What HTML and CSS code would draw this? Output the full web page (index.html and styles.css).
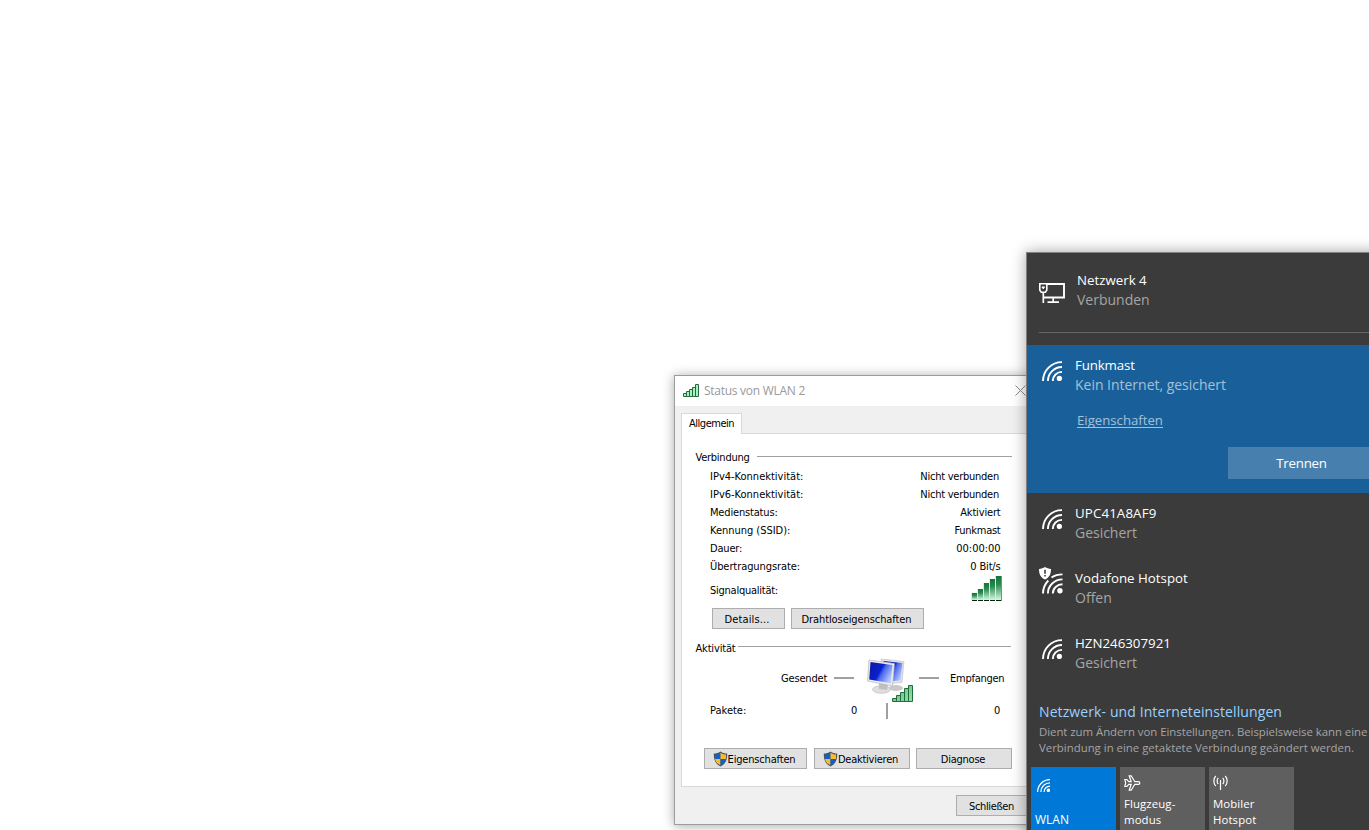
FILE: index.html
```
<!DOCTYPE html>
<html lang="de">
<head>
<meta charset="utf-8">
<title>Status von WLAN 2</title>
<link rel="stylesheet" href="styles.css">
</head>
<body>
<svg class="defs" width="0" height="0">
  <defs>
    <linearGradient id="bar" x1="0" y1="0" x2="0" y2="1"><stop offset="0" stop-color="#107638"/><stop offset=".35" stop-color="#2b8a50"/><stop offset="1" stop-color="#d4f9df"/></linearGradient>
    <linearGradient id="bar2" x1="0" y1="0" x2="1" y2="1"><stop offset="0" stop-color="#58b877"/><stop offset="1" stop-color="#9be0ac"/></linearGradient>
    <linearGradient id="scr" x1="0" y1=".1" x2="1" y2=".6"><stop offset="0" stop-color="#0a1a9c"/><stop offset=".5" stop-color="#0a20d2"/><stop offset=".62" stop-color="#4a68ea"/><stop offset="1" stop-color="#b8caff"/></linearGradient>
    <symbol id="wifi" viewBox="0 0 20 20">
      <g fill="none" stroke="#fff" stroke-width="1.9"><path d="M1 20C1 9.500 9.500 1.100 20 1.100"/><path d="M5.900 20C5.900 12.200 12.200 6 20 6"/><path d="M10.800 20C10.800 14.900 14.900 10.900 20 10.900"/></g>
      <circle cx="17.400" cy="17.400" r="2.700" fill="#fff"/>
    </symbol>
    <symbol id="shield" viewBox="0 0 15 16">
      <path d="M7.500.5C5.500 2 3.200 2.500.8 2.600C.6 8.500 2.200 13 7.500 15.500C12.800 13 14.400 8.500 14.200 2.600C11.800 2.500 9.500 2 7.500.5Z" fill="#4a5560"/>
      <path d="M7.500 1.800C5.800 3 4 3.500 2 3.600L2 8H7.500Z" fill="#0b63c9"/>
      <path d="M7.500 1.800C9.200 3 11 3.500 13 3.600L13 8H7.500Z" fill="#fdb82e"/>
      <path d="M2 8H7.500V14.300C4.200 12.700 2.500 10.800 2 8Z" fill="#fdb82e"/>
      <path d="M13 8H7.500V14.300C10.800 12.700 12.500 10.800 13 8Z" fill="#0b63c9"/>
    </symbol>
  </defs>
</svg>

<main class="desktop">
  <section class="dialog">
    <header class="titlebar">
      <svg class="sig" width="17" height="13" viewBox="0 0 17 13"><g fill="#a4f3b8" stroke="#2a6641"><path d="M.5 9.500h3v3h-3zM3.500 7.500h3v5h-3zM6.500 5.500h3v7h-3zM9.500 3.500h3v9h-3zM12.500.5h3v12h-3z"/></g></svg>
      <h1>Status von WLAN 2</h1>
      <svg class="close" width="11" height="11" viewBox="0 0 11 11"><path d="M.5.5l10 10M10.500.5l-10 10" stroke="#8a8a8a" fill="none"/></svg>
    </header>
    <div class="tabs"><span class="tab t45">Allgemein</span></div>
    <div class="panel">
      <div class="legend conn"><span class="t25">Verbindung</span><i></i></div>
      <dl>
        <div><dt class="t00">IPv4-Konnektivität:</dt><dd class="nv t25">Nicht verbunden</dd></div>
        <div><dt class="t00">IPv6-Konnektivität:</dt><dd class="nv t25">Nicht verbunden</dd></div>
        <div><dt>Medienstatus:</dt><dd>Aktiviert</dd></div>
        <div><dt class="t03">Kennung (SSID):</dt><dd class="t25">Funkmast</dd></div>
        <div><dt>Dauer:</dt><dd class="t03">00:00:00</dd></div>
        <div><dt class="t08">Übertragungsrate:</dt><dd>0 Bit/s</dd></div>
        <div class="signal"><dt class="t25">Signalqualität:</dt><dd>
          <svg width="31" height="27" viewBox="0 0 31 27"><g fill="url(#bar)"><path d="M1 18h5v7H1z"/><path d="M7 14h5v11H7z"/><path d="M13 8h5v17h-5z"/><path d="M19 4h5v21h-5z"/><path d="M25 1h5v24h-5z"/></g><path d="M1 25.500h5M7 25.500h5M13 25.500h5M19 25.500h5M25 25.500h5" stroke="#06220f"/><path d="M.5 18v7M6.500 14v11M12.500 8v17M18.500 4v21M24.500 1v24" stroke="#c5efd0" stroke-width=".8"/><path d="M30.500 1v25" stroke="#6f9a7e"/></svg>
        </dd></div>
      </dl>
      <div class="buttons first"><span class="btn w73 details">Details...</span><span class="btn w133 t08">Drahtloseigenschaften</span></div>
      <div class="legend act"><span>Aktivität</span><i></i></div>
      <div class="traffic">
        <div class="sent"><span>Gesendet</span><i class="dash"></i></div>
        <div class="pcs">
          <svg width="48" height="46" viewBox="0 0 48 46">
            <ellipse cx="29" cy="30" rx="7" ry="3" fill="#c9c9c9"/>
            <path d="M14 1L37 3.500L35 24.500L17 26Z" fill="#e4e4e6" stroke="#bdbdbd" stroke-width=".6"/>
            <path d="M16.500 3L35.500 5L33.500 22.500L18 23.500Z" fill="url(#scr)"/>
            <ellipse cx="14.500" cy="31.500" rx="9" ry="3.800" fill="#dedede" stroke="#bbb" stroke-width=".6"/>
            <path d="M12 25l9 1-1 6-8-1z" fill="#c0c0c0"/>
            <path d="M2 2L27.500 5.500L25.500 28L.5 23Z" fill="#ededf0" stroke="#b4b4b8" stroke-width=".7"/>
            <path d="M3.500 4L25.500 7L23.800 25.300L2.200 21.500Z" fill="url(#scr)"/>
            <g fill="url(#bar2)" stroke="#1e6e3d"><path d="M25.500 40.500h4v3h-4zM29.500 37.500h4v6h-4zM33.500 34.500h4v9h-4zM37.500 30.500h4v13h-4zM41.500 27.500h4v16h-4z"/></g>
          </svg>
          <i class="stem"></i>
        </div>
        <div class="recv"><i class="dash"></i><span class="t25">Empfangen</span></div>
        <div class="packets">Pakete:</div><div class="n1">0</div><div class="n2">0</div>
      </div>
      <div class="buttons second">
        <span class="btn w103"><svg width="15" height="16"><use href="#shield"/></svg>Eigenschaften</span>
        <span class="btn w96"><svg width="15" height="16"><use href="#shield"/></svg><span class="t25">Deaktivieren</span></span>
        <span class="btn w96 plain t25">Diagnose</span>
      </div>
    </div>
    <footer><span class="btn w73 t35">Schließen</span></footer>
  </section>

  <aside class="flyout">
    <div class="wired">
      <svg width="27" height="21" viewBox="0 0 27 21" fill="none" stroke="#fff"><path d="M.8.8h7v6.400l-1.500 2H2.300L.8 7.200z" stroke-width="1.600"/><path d="M2.800 4.300h3M4.300 4v2" stroke-width="1.500"/><path d="M4.300 9V20" stroke-width="1.700"/><path d="M8 1h17v13.500H4" stroke-width="1.900"/><path d="M14.200 15v4M8.500 19.200h11.500" stroke-width="1.700"/></svg>
      <div><h2>Netzwerk 4</h2><p>Verbunden</p></div>
    </div>
    <div class="net active">
      <svg width="20" height="20"><use href="#wifi"/></svg>
      <div><h2 class="fm">Funkmast</h2><p class="tight">Kein Internet, gesichert</p><a>Eigenschaften</a></div>
      <span class="disconnect">Trennen</span>
    </div>
    <div class="net"><svg width="20" height="20"><use href="#wifi"/></svg><div><h2 class="wide">UPC41A8AF9</h2><p class="tight">Gesichert</p></div></div>
    <div class="net open">
      <svg width="24" height="27" viewBox="0 0 24 27"><g fill="none" stroke="#fff" stroke-width="1.900"><path d="M4 26.500c0-5 2-9.500 5.300-13M12.500 10.500c3-2 6.800-3.100 11-3.100"/><path d="M8.900 26.500c0-7.800 6.600-14.100 14.600-14.100M13.800 26.500c0-5.200 4.400-9.200 9.700-9.200"/></g><circle cx="20.900" cy="23.800" r="2.700" fill="#fff"/><path d="M6 0C4.300 1.200 2.300 1.800 0 2c0 5 1.500 8.500 6 10.500c4.500-2 6-5.500 6-10.500C9.700 1.800 7.700 1.200 6 0z" fill="#fff"/><path d="M6 2.800v4M6 8v1.600" stroke="#333" stroke-width="1.500"/></svg>
      <div><h2>Vodafone Hotspot</h2><p>Offen</p></div>
    </div>
    <div class="net"><svg width="20" height="20"><use href="#wifi"/></svg><div><h2>HZN246307921</h2><p class="tight">Gesichert</p></div></div>
    <a class="settings">Netzwerk- und Interneteinstellungen</a>
    <p class="hint">Dient zum Ändern von Einstellungen. Beispielsweise kann eine<br><span>Verbindung in eine getaktete Verbindung geändert werden.</span></p>
    <div class="tiles">
      <div class="tile on"><svg width="13" height="13"><use href="#wifi"/></svg><span class="wl">WLAN</span></div>
      <div class="tile"><svg width="17" height="16" viewBox="0 0 17 16" fill="none" stroke="#fff" stroke-width="1.200"><path d="M1.700 8L.8 4.500H2.800L4.800 6.700H7.200L5.200.8H7.200L10.800 6.700H14.500a1.300 1.300 0 010 2.600H10.800L7.200 15.200H5.200L7.200 9.300H4.800L2.800 11.500H.8Z"/></svg><span>Flugzeug-<br>modus</span></div>
      <div class="tile"><svg width="16" height="15" viewBox="0 0 16 15" fill="none" stroke="#fff" stroke-width="1.200"><path d="M2.800 1C.2 3.500.2 8.500 2.800 11M5.300 3C3.700 4.500 3.700 7.500 5.300 9M12.200 1c2.600 2.500 2.600 7.500 0 10M9.700 3c1.600 1.500 1.600 4.500 0 6M7.500 5v10"/></svg><span>Mobiler<br>Hotspot</span></div>
    </div>
  </aside>
</main>
</body>
</html>
```
FILE: styles.css
```
* { box-sizing: border-box; margin: 0; padding: 0; }
body { background: #fff; overflow: hidden; }
svg { display: block; flex: none; }
.defs { position: absolute; }
i { display: block; }
.desktop { position: relative; width: 1369px; height: 830px; overflow: hidden; background: #fff; }

/* status dialog */
.dialog {
  position: absolute; left: 674px; top: 375px; width: 376px; height: 450px;
  display: flex; flex-direction: column;
  background: #f0f0f0; border: 1px solid #9c9c9c;
  box-shadow: 0 1px 11px rgba(0,0,0,.34);
  font: 11px/18px "DejaVu Sans Condensed", "DejaVu Sans", sans-serif; letter-spacing: -.17px; color: #000;
  white-space: nowrap;
}
.t00 { letter-spacing: 0; }
.t03 { letter-spacing: -.03px; }
.t08 { letter-spacing: -.08px; }
.t25 { letter-spacing: -.25px; }
.t35 { letter-spacing: -.35px; }
.t45 { letter-spacing: -.47px; }
.titlebar { display: flex; align-items: center; height: 30px; padding-left: 8px; background: #fff; }
.titlebar .sig { margin-top: -1px; }
.titlebar h1 { flex: none; width: 316px; margin-left: 4px; font: 12px/18px "Open Sans", sans-serif; letter-spacing: -.27px; color: #999; }
.titlebar .close { margin: -2px 0 0 -5px; }
.tabs { height: 27px; padding: 7px 0 0 6px; }
.tab { position: relative; z-index: 1; display: block; width: 61px; height: 21px; padding-left: 7px; line-height: 19px; background: #fff; border: 1px solid #d9d9d9; border-bottom: 0; }
.panel { height: 354px; margin: 0 6px; padding-top: 15px; background: #fff; border: 1px solid #d9d9d9; }
.legend { display: flex; align-items: flex-start; height: 18px; padding-left: 13.5px; }
.legend span { flex: none; }
.legend i { flex: none; height: 1px; margin-top: 7px; background: #a0a0a0; }
.conn span { width: 61.5px; }
.conn i { width: 255px; }
.act { margin-top: 11px; }
.act span { width: 42.5px; }
.act i { width: 273px; margin-top: 6px; }
dl { margin-top: 1px; padding: 0 43px 0 28px; width: 362px; }
dl > div { display: flex; justify-content: space-between; width: 290.500px; }
dd.nv { margin-right: 1.500px; }
dl > .signal { width: 292px; height: 32px; }
.signal dt { margin-top: 6px; }
.signal dd { margin-top: -1px; }
.buttons { display: flex; height: 21px; }
.first { padding-left: 30px; gap: 6px; }
.second { margin-top: 20px; padding-left: 22px; gap: 7px; }
.second .plain { margin-left: -1px; }
.btn { display: flex; align-items: center; justify-content: center; height: 21px; padding: 2px 2px 0 0; background: #e1e1e1; border: 1px solid #adadad; }
.btn svg { margin: -2px 0 0 -1px; }
.details { padding-right: 3px; letter-spacing: .15px; }
.w73 { width: 73px; }
.w96 { width: 96px; }
.w103 { width: 103px; }
.w133 { width: 133px; }
.traffic { display: grid; grid-template: 44px 26px / 177px 60px 100px; height: 70px; }
.sent, .recv { display: flex; align-items: flex-start; padding-top: 12px; }
.sent { padding-left: 99px; }
.sent span { width: 53px; }
.recv span { margin-left: 11px; }
.dash { flex: none; width: 20px; height: 2px; margin-top: 7px; background: #a0a0a0; }
.pcs { grid-row: 1 / 3; grid-column: 2; padding: 0 0 0 8px; }
.stem { width: 2px; height: 16px; margin: -1px 0 0 19px; background: #a0a0a0; }
.recv { grid-column: 3; }
.packets { grid-row: 2; grid-column: 1; padding-left: 28px; letter-spacing: 0; }
.n1 { grid-row: 2; grid-column: 1; justify-self: end; padding-right: 2px; }
.n2 { grid-row: 2; grid-column: 3; padding-left: 75px; }
.dialog footer { display: flex; padding: 8px 0 0 281px; }

/* network flyout */
.flyout {
  position: absolute; left: 1026px; top: 252px; width: 362px; height: 620px;
  background: #3b3b3b; border: 1px solid #808080;
  box-shadow: 0 0 14px rgba(0,0,0,.36);
  font: 14px/20px "Open Sans", sans-serif; color: #fff; white-space: nowrap;
}
.flyout h2 { font-size: 13.3px; font-weight: 400; line-height: 20px; }
.flyout h2.fm { letter-spacing: -.15px; }
.flyout h2.wide { letter-spacing: .12px; }
.flyout p { color: #a5a5a5; letter-spacing: 0; }
.flyout p.tight { letter-spacing: -.02px; }
.wired { display: flex; height: 80px; margin: 0 0 12px 12px; padding-top: 17px; border-bottom: 1px solid #666; }
.wired svg { margin-top: 13px; }
.wired > div { margin-left: 11px; }
.net { display: flex; height: 65px; padding: 10px 12px 0 15px; }
.net > svg { margin-top: 6px; }
.net > div { margin-left: 13px; }
.open { padding-left: 12px; }
.open > svg { margin-top: -1px; }
.open > div { margin-left: 12px; }
.active { height: 148px; background: #19609a; }
.flyout .active p, .active a { color: #a3c0d8; }
.active a { display: block; width: 86px; height: 18px; margin: 15px 0 0 2px; font-size: 13.2px; line-height: 20px; border-bottom: 1px solid #a3c0d8; }
.disconnect { width: 147px; height: 32px; margin: 92px 0 0 auto; background: #4780ae; font-size: 13.3px; letter-spacing: -.25px; line-height: 32px; text-align: center; }
.net.active > div { width: 153px; }
.settings { display: block; margin: 14px 0 0 12px; color: #99d1ff; letter-spacing: .1px; }
.flyout .hint { margin: 2px 0 0 12px; font-size: 11.4px; line-height: 16px; letter-spacing: -.04px; }
.hint span { letter-spacing: 0; }
.tiles { display: flex; gap: 4px; margin: 11px 0 0 4px; font-size: 11.4px; line-height: 16px; }
.tile { display: flex; flex-direction: column; justify-content: space-between; width: 85px; height: 72px; padding: 8px 4px 11px; background: #5f5f5f; }
.tile + .tile span { letter-spacing: .1px; }
.on { padding-top: 12px; background: #0078d7; }
.on svg { margin-left: 2px; }
.wl { font-size: 12px; }
```
